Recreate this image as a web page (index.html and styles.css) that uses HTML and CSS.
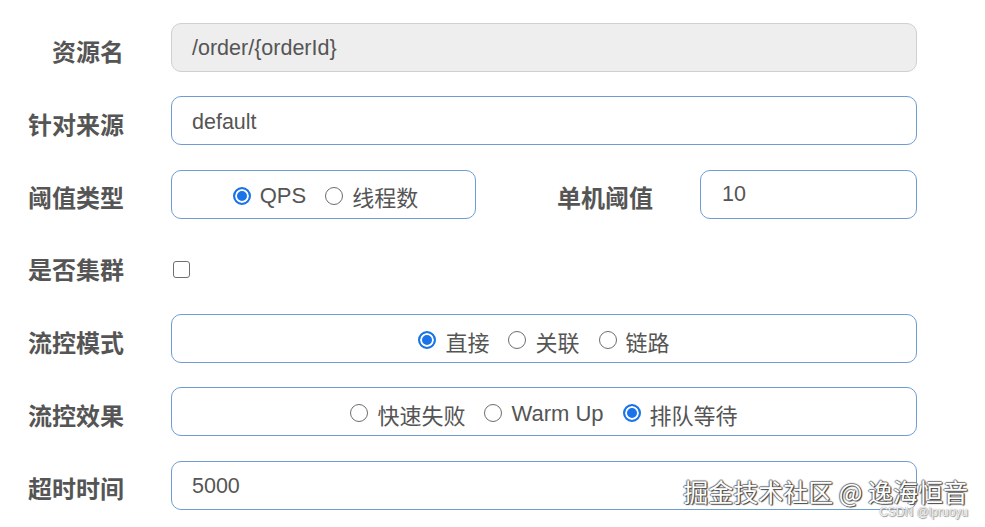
FILE: index.html
```html
<!DOCTYPE html>
<html lang="zh-CN">
<head>
<meta charset="utf-8">
<title>流控规则</title>
<link rel="stylesheet" href="styles.css">
</head>
<body>
<form class="form">
  <div class="row">
    <label class="label">资源名</label>
    <div class="field input disabled">/order/{orderId}</div>
  </div>
  <div class="row">
    <label class="label">针对来源</label>
    <div class="field input">default</div>
  </div>
  <div class="row">
    <label class="label">阈值类型</label>
    <div class="split">
      <div class="box radios small">
        <span class="radio"><span class="dot on"></span>QPS</span>
        <span class="radio"><span class="dot"></span>线程数</span>
      </div>
      <label class="label inner">单机阈值</label>
      <div class="input narrow">10</div>
    </div>
  </div>
  <div class="row check-row">
    <label class="label">是否集群</label>
    <div class="field"><span class="checkbox"></span></div>
  </div>
  <div class="row">
    <label class="label">流控模式</label>
    <div class="field box radios">
      <span class="radio"><span class="dot on"></span>直接</span>
      <span class="radio"><span class="dot"></span>关联</span>
      <span class="radio"><span class="dot"></span>链路</span>
    </div>
  </div>
  <div class="row">
    <label class="label">流控效果</label>
    <div class="field box radios">
      <span class="radio"><span class="dot"></span>快速失败</span>
      <span class="radio"><span class="dot"></span>Warm Up</span>
      <span class="radio"><span class="dot on"></span>排队等待</span>
    </div>
  </div>
  <div class="row">
    <label class="label">超时时间</label>
    <div class="field input">5000</div>
  </div>
</form>
<div class="watermark">掘金技术社区 @ 逸海恒音</div>
<div class="csdn">CSDN @lpruoyu</div>
</body>
</html>
```

FILE: styles.css
```css
html, body {
  margin: 0;
  padding: 0;
  background: #ffffff;
  width: 985px;
  height: 527px;
  overflow: hidden;
  position: relative;
}

.form {
  padding-top: 23px;
  display: flex;
  flex-direction: column;
  gap: 24.3px;
  font-family: "Liberation Sans", "Noto Sans CJK SC", sans-serif;
  color: #555555;
}

.row {
  display: grid;
  grid-template-columns: 124px 746px;
  column-gap: 47px;
  height: 49px;
  align-items: center;
}

.label {
  font-family: "Noto Sans CJK SC", sans-serif;
  font-weight: 700;
  font-size: 24px;
  color: #555555;
  text-align: right;
  padding-top: 5px;
  white-space: nowrap;
}

.input,
.box {
  box-sizing: border-box;
  height: 49px;
  border: 1px solid #6e9cd3;
  border-radius: 10px;
  background: #ffffff;
}

.input {
  display: flex;
  align-items: center;
  padding-left: 20px;
  padding-top: 3px;
  font-size: 21.5px;
  color: #555555;
}

.input.disabled {
  background: #eeeeee;
  border-color: #d0d0d0;
  padding-top: 1px;
}

.split {
  display: flex;
  align-items: center;
  height: 49px;
}

.box.small {
  width: 305px;
  padding-left: 4px;
}

.label.inner {
  flex: 1;
}

.input.narrow {
  width: 217px;
  margin-left: 47px;
  padding-left: 21px;
  padding-top: 1px;
}

.radios {
  display: flex;
  align-items: center;
  justify-content: center;
  gap: 19px;
  padding-top: 4px;
}

.radio {
  display: inline-flex;
  align-items: center;
  gap: 9px;
  font-family: "Liberation Sans", "Noto Sans CJK SC", sans-serif;
  font-size: 22px;
  color: #555555;
}

.dot {
  box-sizing: border-box;
  width: 18px;
  height: 18px;
  border-radius: 50%;
  border: 1.5px solid #6d6d6d;
  background: #ffffff;
  margin-top: -1px;
  flex: none;
}

.dot.on {
  border: 2px solid #1a73e8;
  background: #1a73e8;
  box-shadow: inset 0 0 0 2px #ffffff;
}

.check-row {
  height: 47px;
}

.checkbox {
  display: block;
  box-sizing: border-box;
  width: 17px;
  height: 17px;
  margin-left: 2px;
  margin-top: 6px;
  border: 1.5px solid #707070;
  border-radius: 3px;
  background: #ffffff;
}

.watermark {
  position: absolute;
  right: 17px;
  top: 476px;
  font-family: "Noto Sans CJK SC", sans-serif;
  font-size: 25px;
  line-height: 30px;
  color: #ffffff;
  text-shadow: 1px 1px 1px #444, -1px 0 1px #777, 0 -1px 1px #777, 1px 0 1px #555;
  white-space: nowrap;
}

.csdn {
  position: absolute;
  right: 17px;
  top: 505px;
  font-family: "Liberation Sans", sans-serif;
  font-size: 12px;
  line-height: 14px;
  color: #f2f2f2;
  text-shadow: 0 0 1px #888, 1px 1px 1px #999;
  white-space: nowrap;
}
```
